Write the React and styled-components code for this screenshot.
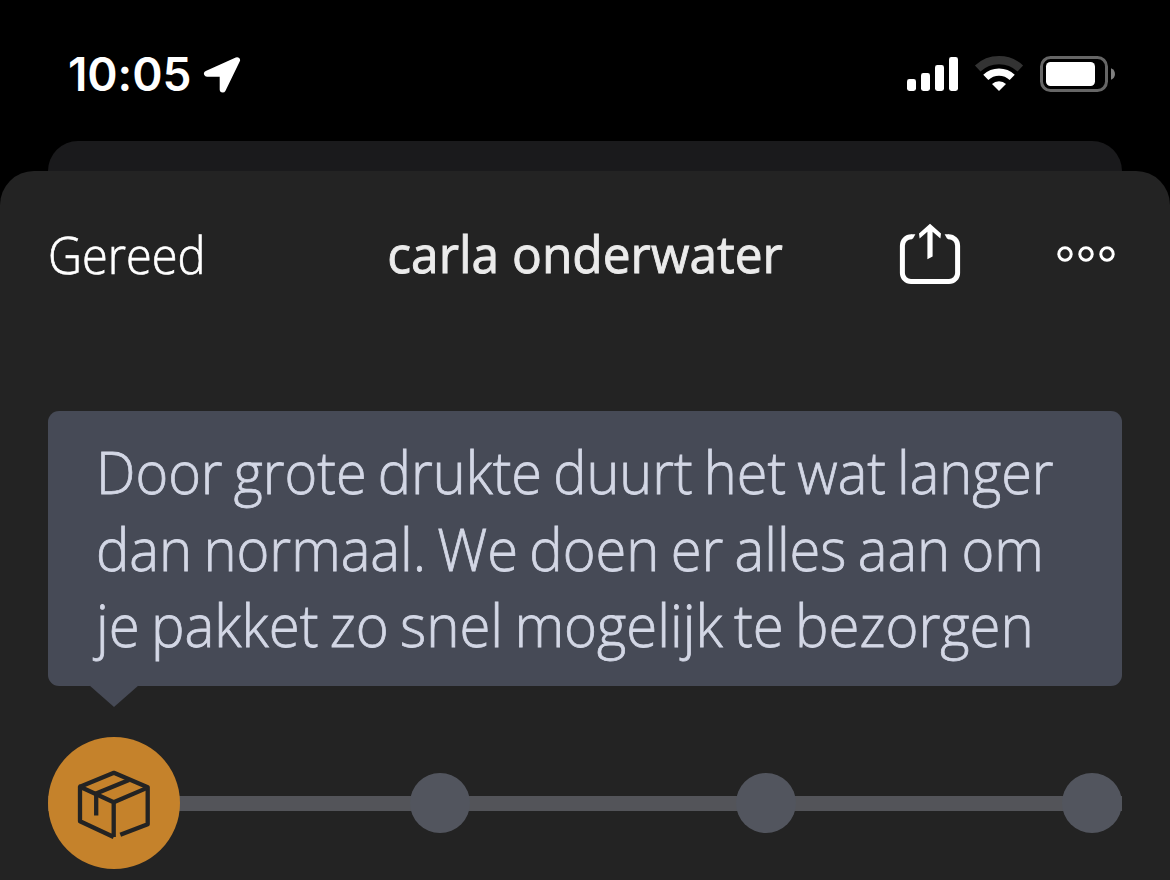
import React from "react";
import styled, {createGlobalStyle} from "styled-components";

const GlobalStyle = createGlobalStyle`
  * {
    box-sizing: border-box;
  }

  body {
    margin: 0;
    background: #000;
    font-family: "Open Sans", "Noto Sans", sans-serif;
    overflow: hidden;
  }

  svg {
    display: block;
    flex: none;
  }
`

const Screen = styled.div`
  height: 880px;
  display: flex;
  flex-direction: column;
  background: #000;
`

const StatusBar = styled.header`
  height: 141px;
  padding: 50px 54px 0 68px;
  display: flex;
  justify-content: space-between;
  align-items: flex-start;
`

const StatusGroup = styled.div`
  display: flex;
  align-items: center;
  height: 48px;
  gap: ${props => props.gap};
`

const Time = styled.span`
  font-family: Inter, sans-serif;
  font-size: 46px;
  font-weight: 600;
  line-height: 48px;
  letter-spacing: -0.1px;
  color: #fff;
`

const BackSheet = styled.div`
  height: 30px;
  margin: 0 48px;
  border-radius: 30px 30px 0 0;
  background: #1a1a1c;
`

const Sheet = styled.main`
  flex: 1;
  padding: 0 48px;
  border-radius: 34px 34px 0 0;
  background: #232323;
`

const NavBar = styled.nav`
  height: 166px;
  display: grid;
  grid-template-columns: 1fr auto 1fr;
  align-items: center;
`

const Fit = styled.span`
  display: block;
  width: max-content;
  white-space: nowrap;
  transform: scaleX(${props => props.scale});
  transform-origin: ${props => props.origin || 'left'} center;
`

const NavButton = styled(Fit)`
  font-size: 51px;
  font-weight: 300;
  color: #fff;
  -webkit-text-stroke: 0.7px #fff;
`

const Title = styled(Fit)`
  font-size: 52px;
  font-weight: 500;
  padding-bottom: 4px;
  color: #ebebeb;
  -webkit-text-stroke: 0.9px #ebebeb;
`

const Actions = styled.div`
  display: flex;
  justify-content: flex-end;
  align-items: center;
  gap: 96px;
  padding-right: 7px;
`

const Bubble = styled.section`
  position: relative;
  height: 275px;
  margin-top: 74px;
  padding: 22px 48px;
  border-radius: 11px;
  background: #464a56;

  &::after {
    content: '';
    position: absolute;
    top: 274px;
    left: 41px;
    width: 50px;
    height: 22px;
    background: #464a56;
    clip-path: polygon(0 0, 100% 0, 50% 100%);
  }
`

const BubbleLine = styled(Fit)`
  font-size: 59px;
  font-weight: 300;
  line-height: 76.5px;
  word-spacing: -3.5px;
  color: #d3d7e5;
  -webkit-text-stroke: 0.8px #d3d7e5;
`

const Timeline = styled.div`
  height: 132px;
  margin-top: 51px;
  display: flex;
  justify-content: space-between;
  align-items: center;
  background: linear-gradient(#535459, #535459) 0 59px / 100% 15px no-repeat;
`

const ActiveStep = styled.div`
  width: 132px;
  height: 132px;
  margin-right: -36px;
  border-radius: 50%;
  background: #c5822b;
`

const Step = styled.div`
  width: 60px;
  height: 60px;
  border-radius: 50%;
  background: #52555e;
`

const lines = [
	{text: 'Door grote drukte duurt het wat langer', scale: 0.946},
	{text: 'dan normaal. We doen er alles aan om', scale: 0.95},
	{text: 'je pakket zo snel mogelijk te bezorgen', scale: 0.954},
]

const LocationIcon = () => (
	<svg width="38" height="38" viewBox="203 55 38 38">
		<path d="M237 60.3 207 73.8H222.7V89.6Z" fill="#fff" stroke="#fff" strokeWidth="6" strokeLinejoin="round"/>
	</svg>
)

const SignalIcon = () => (
	<svg width="51" height="36" viewBox="907 56 51 36" fill="#fff">
		<rect x="907" y="79" width="9" height="12" rx="2.4"/>
		<rect x="921" y="73" width="9" height="18" rx="2.4"/>
		<rect x="935" y="65" width="9" height="26" rx="2.4"/>
		<rect x="949" y="57" width="9" height="34" rx="2.4"/>
	</svg>
)

const WifiIcon = () => (
	<svg width="50" height="38" viewBox="974 55 50 38" fill="none">
		<path d="M977.7 68.4A31.4 31.4 0 0 1 1020.3 68.4" stroke="#333" strokeWidth="8.2"/>
		<path d="M985.8 77.4A19.2 19.2 0 0 1 1012.2 77.4" stroke="#fff" strokeWidth="7.4"/>
		<path d="M992 84A10 10 0 0 1 1006 84L999 91Z" fill="#fff"/>
	</svg>
)

const BatteryIcon = () => (
	<svg width="76" height="36" viewBox="1040 56 76 36">
		<rect x="1041.5" y="57.5" width="65" height="33" rx="9" fill="none" stroke="#666" strokeWidth="3"/>
		<rect x="1046" y="62" width="49" height="24" rx="4.5" fill="#fff"/>
		<path d="M1111 68.3C1116.3 70 1116.3 78 1111 79.7Z" fill="#808080"/>
	</svg>
)

const ShareIcon = () => (
	<svg width="62" height="62" viewBox="899 223 62 62" fill="#fff">
		<path
			d="M912 236.7H911.5A9 9 0 0 0 902.4 245.7V273A8.6 8.6 0 0 0 911 281.6H949A8.6 8.6 0 0 0 957.6 273V245.7A9 9 0 0 0 948.6 236.7H948"
			fill="none" stroke="#fff" strokeWidth="5"
		/>
		<path d="M911.5 234.2H915.4L913 238.4 911.5 239.2ZM948.5 234.2H944.6L947 238.4 948.5 239.2Z"/>
		<path
			d="M930 223.8 941 233.6 940.4 238.4 932.6 231.8V256.6L927.4 259.2V231.8L919.6 238.4 919 233.6Z"
		/>
	</svg>
)

const MoreIcon = () => (
	<svg width="58" height="18" viewBox="1057 245 58 18" fill="none" stroke="#fff" strokeWidth="3">
		<circle cx="1065" cy="254" r="6.2"/>
		<circle cx="1086" cy="254" r="6.2"/>
		<circle cx="1107" cy="254" r="6.2"/>
	</svg>
)

const PackageIcon = () => (
	<svg width="132" height="132" viewBox="48 737 132 132" fill="none" stroke="#232323" strokeWidth="4.3">
		<path d="M113.7 837V802.3L80 786.8V821.2L113.7 837" strokeLinejoin="round"/>
		<path d="M80 786.8 113.9 772.8 147.7 787.3V824.3L120.3 834.8" strokeLinejoin="round"/>
		<path d="M113.7 802.3 147.7 787.6M129 780 96.2 793.4V815.5"/>
	</svg>
)

function App() {
	return (
		<Screen>
			<GlobalStyle/>
			<StatusBar>
				<StatusGroup gap="12px">
					<Time>10:05</Time>
					<LocationIcon/>
				</StatusGroup>
				<StatusGroup gap="16px">
					<SignalIcon/>
					<WifiIcon/>
					<BatteryIcon/>
				</StatusGroup>
			</StatusBar>
			<BackSheet/>
			<Sheet>
				<NavBar>
					<NavButton scale={0.92}>Gereed</NavButton>
					<Title scale={0.955} origin="center">carla onderwater</Title>
					<Actions>
						<ShareIcon/>
						<MoreIcon/>
					</Actions>
				</NavBar>
				<Bubble>
					{lines.map(line => <BubbleLine key={line.text} scale={line.scale}>{line.text}</BubbleLine>)}
				</Bubble>
				<Timeline>
					<ActiveStep><PackageIcon/></ActiveStep>
					<Step/>
					<Step/>
					<Step/>
				</Timeline>
			</Sheet>
		</Screen>
	);
}

export default App;
